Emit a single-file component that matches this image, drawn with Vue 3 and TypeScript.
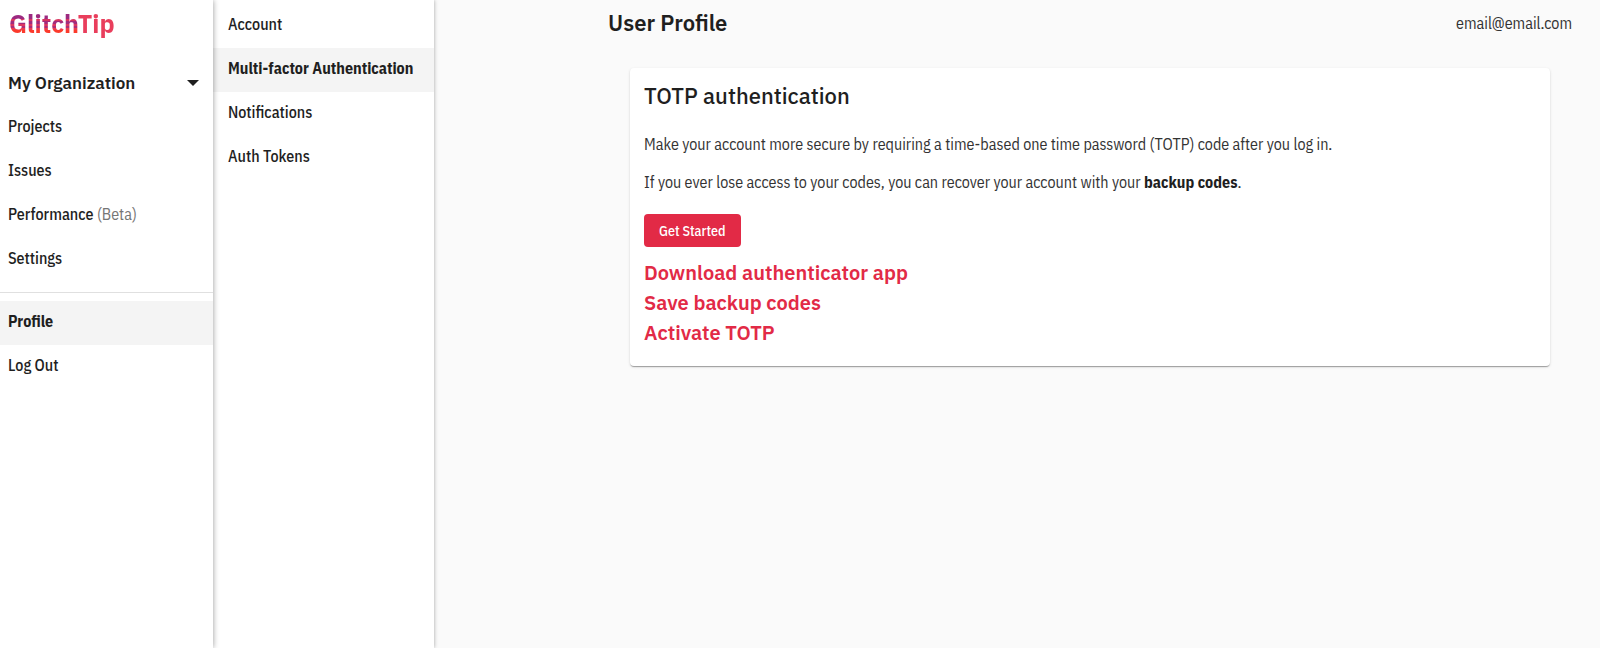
<script setup lang="ts">
import { ref } from 'vue'

interface NavItem {
  label: string
  note?: string
}

const orgItems: NavItem[] = [
  { label: 'Projects' },
  { label: 'Issues' },
  { label: 'Performance', note: '(Beta)' },
  { label: 'Settings' },
]
const userItems: NavItem[] = [{ label: 'Profile' }, { label: 'Log Out' }]
const profileItems: NavItem[] = [
  { label: 'Account' },
  { label: 'Multi-factor Authentication' },
  { label: 'Notifications' },
  { label: 'Auth Tokens' },
]
const steps: string[] = ['Download authenticator app', 'Save backup codes', 'Activate TOTP']

const activeMain = ref('Profile')
const activeProfile = ref('Multi-factor Authentication')
</script>

<template>
  <div class="layout">
    <aside class="sidebar">
      <a class="logo" href="#"><span class="logo-glitch">Glitch</span><span class="logo-tip">Tip</span></a>
      <button class="org" type="button">
        <span>My Organization</span>
        <svg class="caret" viewBox="0 0 12 6" aria-hidden="true"><path d="M0 0h12L6 6z" fill="#1f1f1f" /></svg>
      </button>
      <nav class="nav">
        <a v-for="item in orgItems" :key="item.label" class="nav-item" href="#">
          {{ item.label }} <span v-if="item.note" class="note">{{ item.note }}</span>
        </a>
      </nav>
      <hr class="divider" />
      <nav class="nav">
        <a
          v-for="item in userItems"
          :key="item.label"
          class="nav-item"
          :class="{ active: item.label === activeMain }"
          href="#"
        >{{ item.label }}</a>
      </nav>
    </aside>

    <nav class="subnav">
      <a
        v-for="item in profileItems"
        :key="item.label"
        class="nav-item sub"
        :class="{ active: item.label === activeProfile }"
        href="#"
        @click.prevent="activeProfile = item.label"
      >{{ item.label }}</a>
    </nav>

    <main class="main">
      <div class="content">
        <header class="header">
          <h1 class="title">User Profile</h1>
          <span class="email">email@email.com</span>
        </header>
        <section class="card">
          <h2 class="card-title">TOTP authentication</h2>
          <p>Make your account more secure by requiring a time-based one time password (TOTP) code after you log in.</p>
          <p>If you ever lose access to your codes, you can recover your account with your <strong>backup codes</strong>.</p>
          <button class="primary" type="button">Get Started</button>
          <h3 v-for="step in steps" :key="step" class="step">{{ step }}</h3>
        </section>
      </div>
    </main>
  </div>
</template>

<style>
body {
  margin: 0;
  background: #fafafa;
}
</style>

<style scoped>
.layout {
  display: flex;
  min-height: 100vh;
  font-family: "IBM Plex Sans Condensed", Roboto, sans-serif;
  font-size: 16px;
  line-height: 24px;
  color: #1f1f1f;
}
.logo,
.org,
.title,
.card-title,
.step {
  font-family: "IBM Plex Sans", Roboto, sans-serif;
}
.sidebar,
.subnav {
  flex: none;
  box-sizing: border-box;
  background: #fff;
}
.sidebar {
  position: relative;
  z-index: 1;
  width: 213px;
  box-shadow: 0 0 6px rgba(0, 0, 0, 0.4);
}
.subnav {
  width: 221px;
  padding-top: 4px;
  box-shadow: 0 0 4px rgba(0, 0, 0, 0.35);
  white-space: nowrap;
}
.logo {
  display: block;
  padding: 8px 9px;
  font-size: 25px;
  line-height: 32px;
  font-weight: 700;
  text-decoration: none;
}
.logo-glitch,
.logo-tip {
  color: transparent;
  background-clip: text;
}
/* Stepped bands give the first half of the wordmark its glitch effect. */
.logo-glitch {
  background-image: linear-gradient(
    #9c2a80 0 36%,
    #d8345f 36% 42%,
    #a32b7c 42% 52%,
    #dc3760 52% 58%,
    #b02c75 58% 63%,
    #ee3c4c 63% 69%,
    #fb3a2c 69%
  );
}
.logo-tip {
  background-image: linear-gradient(#e93e5c, #e93e5c);
}
.org {
  display: flex;
  align-items: center;
  justify-content: space-between;
  width: 100%;
  height: 44px;
  margin: 13px 0 1px;
  padding: 0 14px 0 8px;
  border: 0;
  background: none;
  color: inherit;
  font-size: 17px;
  font-weight: 600;
}
.caret {
  width: 12px;
  height: 6px;
}
.nav-item {
  display: block;
  padding: 9px 8px 13px;
  line-height: 22px;
  color: inherit;
  font-weight: 500;
  text-decoration: none;
}
.nav-item.sub {
  padding-left: 15px;
  padding-right: 15px;
}
.nav-item.active {
  background: #f4f4f4;
  font-weight: 700;
}
.note {
  color: #757575;
  font-weight: 400;
}
.divider {
  height: 1px;
  margin: 10px 0 8px;
  border: 0;
  background: #e0e0e0;
}
.main {
  flex: 1;
  min-width: 0;
}
.content {
  max-width: 1020px;
  margin-left: auto;
}
.header {
  display: flex;
  align-items: center;
  justify-content: space-between;
  height: 46px;
  padding: 0 28px;
}
.title {
  margin: 0;
  font-size: 22px;
  line-height: 32px;
  font-weight: 600;
}
.email {
  color: #333;
}
.card {
  margin: 22px 50px;
  padding: 12px 14px 18px;
  border-radius: 4px;
  background: #fff;
  box-shadow: 0 2px 1px -1px rgba(0, 0, 0, 0.2), 0 1px 1px rgba(0, 0, 0, 0.14), 0 1px 3px rgba(0, 0, 0, 0.12);
}
.card-title {
  margin: 0 0 20px;
  font-size: 22px;
  line-height: 32px;
  font-weight: 500;
}
.card p {
  margin: 0 0 14px;
  color: #333;
}
.card strong {
  color: #1f1f1f;
  font-weight: 700;
}
.primary {
  display: block;
  height: 33px;
  margin: 20px 0 11px;
  padding: 0 15px;
  border: 0;
  border-radius: 4px;
  background: #e22a46;
  color: #fff;
  font: inherit;
  font-size: 14px;
  font-weight: 500;
}
.step {
  margin: 0;
  color: #e22a46;
  font-size: 20px;
  line-height: 30px;
  font-weight: 600;
}
</style>
